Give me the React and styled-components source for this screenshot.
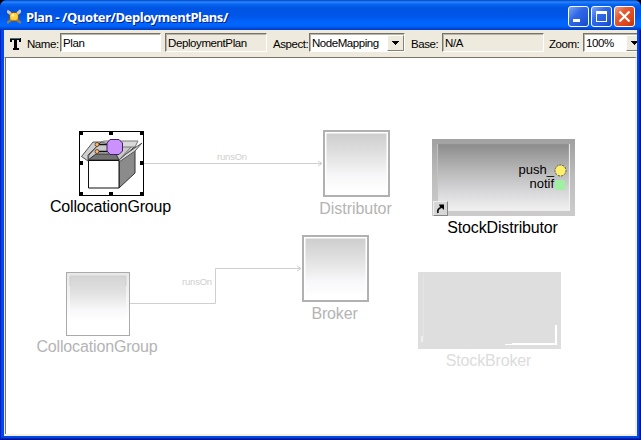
import React from "react";
import styled, { createGlobalStyle } from "styled-components";

const Global = createGlobalStyle`
  html, body { margin: 0; padding: 0; background: #000; overflow: hidden; }
  * { box-sizing: border-box; }
`;

const Window = styled.div`
  width: 641px;
  height: 440px;
  display: flex;
  flex-direction: column;
  overflow: hidden;
  border-radius: 7px 7px 0 0;
  background: #0048e8;
  box-shadow: inset 1px 0 #001dc0, inset -1px -1px #00128c, inset -2px -2px #0024b8;
  font-family: "Liberation Sans", Arial, sans-serif;
  color: #000;
`;

const TitleBar = styled.header`
  height: 30px;
  flex: none;
  display: flex;
  align-items: center;
  padding: 2px 6px 0 7px;
  background: linear-gradient(#0044c8 0, #2a86fa 2px, #0868f4 4px, #0054e2 8px, #0056e8 16px, #0064fc 22px, #0066ff 26px, #0050e0 28px, #0038bc 30px);
`;

const Title = styled.h1`
  flex: 1;
  margin: 1px 0 0 5px;
  font: bold 13px/20px "Noto Sans", sans-serif;
  letter-spacing: -0.43px;
  white-space: nowrap;
  color: #fff;
  text-shadow: 1px 1px #00228c;
`;

const WindowButton = styled.button`
  width: 21px;
  height: 21px;
  margin-left: 2px;
  padding: 0;
  border: 1px solid #fff;
  border-radius: 3px;
  background: ${(p) =>
    p.$close
      ? "linear-gradient(135deg, #f0a088 0, #e45a34 35%, #dc4418 75%, #b83410)"
      : "linear-gradient(135deg, #7ca4f8 0, #3068e8 40%, #2458dc 75%, #1848bc)"};
  svg { display: block; }
`;

const Toolbar = styled.div`
  height: 27px;
  flex: none;
  margin: 0 4px;
  padding: 3px 0 0 5px;
  display: flex;
  align-items: flex-start;
  overflow: hidden;
  background: #eeeadd;
  font-size: 11.5px;
  > svg { flex: none; }
`;

const FieldLabel = styled.label`
  flex: none;
  width: ${(p) => p.$width}px;
  padding-left: ${(p) => p.$indent}px;
  line-height: 22px;
  letter-spacing: -0.45px;
  white-space: nowrap;
`;

const Field = styled.div`
  flex: none;
  display: flex;
  width: ${(p) => p.$width}px;
  height: 19px;
  padding-left: 2px;
  border: 1px solid;
  border-color: #77736a #fff #fff #77736a;
  box-shadow: inset 1px 1px #b9b5a9;
  background: ${(p) => (p.$readOnly ? "#eeeadd" : "#fff")};
  line-height: 18px;
  letter-spacing: ${(p) => p.$spacing || -0.4}px;
  white-space: nowrap;
  span { flex: 1; }
`;

const DropButton = styled.i`
  flex: none;
  width: 17px;
  height: 16px;
  margin-top: 1px;
  display: flex;
  align-items: center;
  justify-content: center;
  background: #eeeadd;
  border: 1px solid;
  border-color: #fff #858174 #858174 #fff;
`;

const Canvas = styled.main`
  position: relative;
  flex: none;
  height: 379px;
  margin: 0 4px;
  border: 1px solid;
  border-color: #787368 #f2efe6 #f2efe6 #eeeadd;
  border-bottom-width: 2px;
  border-right-width: 2px;
  box-shadow: inset 1px 0 #787368;
  background: #fff;
  overflow: hidden;
`;

/* Canvas coordinates are shifted by the window frame. */
const Item = styled.div`
  position: absolute;
  left: ${(p) => p.$x - 5}px;
  top: ${(p) => p.$y - 58}px;
  display: flex;
  flex-direction: column;
  align-items: center;
  width: ${(p) => p.$w}px;
`;

const Drawing = styled.svg`
  display: block;
  flex: none;
`;

const Links = styled.svg`
  position: absolute;
  left: -5px;
  top: -58px;
`;

const Caption = styled.span`
  margin-top: ${(p) => p.$gap || 1}px;
  margin-left: -2px;
  font-size: 16px;
  line-height: 20px;
  letter-spacing: ${(p) => p.$spacing || -0.15}px;
  white-space: nowrap;
  color: ${(p) => p.$color || "#b4b4b4"};
`;

const LinkCaption = styled.span`
  position: absolute;
  left: ${(p) => p.$x - 5}px;
  top: ${(p) => p.$y - 58}px;
  font-size: 9.5px;
  line-height: 12px;
  letter-spacing: -0.2px;
  color: #cfcfcf;
`;

const Component = styled.div`
  width: 143px;
  height: 77px;
  position: relative;
  border: 5px solid;
  border-image: linear-gradient(#a2a2a2, #bdbdbd 50%, #cbcbcb) 1;
  background: linear-gradient(#8b8b8b, #b3b3b3 35%, #d6d6d9 70%, #f2f2f2);
  box-shadow: inset 1px 0 1px #c4c4c4, inset -1px -1px 1px #f3f3f3;
`;

const Ports = styled.div`
  display: flex;
  flex-direction: column;
  align-items: flex-end;
  padding: 19px 3px 0 0;
`;

const Port = styled.div`
  display: flex;
  align-items: center;
  height: 14px;
  font-size: 13px;
  line-height: 14px;
  letter-spacing: 0;
`;

const Shortcut = styled.div`
  position: absolute;
  left: -4px;
  bottom: -5px;
  width: 15px;
  height: 15px;
  background: #d6d6d6;
  border: 1px solid #858585;
  border-top-color: #eee;
  border-left-color: #eee;
  svg { display: block; }
`;

function Arrow() {
  return (
    <svg width="7" height="4" viewBox="0 0 7 4" shapeRendering="crispEdges">
      <path d="M0 0H7L3.5 4Z" />
    </svg>
  );
}

function AppIcon() {
  return (
    <svg width="14" height="15" viewBox="0 0 14 15">
      <path d="M2.5 3.5H11.5V12H2.5Z" fill="#f5a51c" stroke="#7a5420" />
      <path d="M0 2L3.5 4.5M14 1.5L10.5 4.5" stroke="#c8c8bc" strokeWidth="3" />
      <path d="M0 14L4 11M10 11L14 14" stroke="#8d7c54" strokeWidth="2.5" />
      <circle cx="7" cy="7.5" r="3.6" fill="#ffd23f" />
      <path d="M4.5 6L7 4.5V7.5H4.5Z" fill="#fff6b8" />
    </svg>
  );
}

function NodeBox({ id, thin }) {
  const size = thin ? 64 : 67;
  return (
    <Drawing width={size} height={size} viewBox={`0 0 ${size} ${size}`}>
      <defs>
        <linearGradient id={id} x1="0" y1="0" x2="0" y2="1">
          <stop offset="0" stopColor={thin ? "#d4d4d4" : "#cdcdcd"} />
          <stop offset=".35" stopColor="#e0e0e0" />
          <stop offset=".75" stopColor="#f8f7f9" />
          <stop offset="1" stopColor="#fff" />
        </linearGradient>
        <linearGradient id={`${id}-rim`} x1="0" y1="0" x2="0" y2="1">
          <stop stopColor="#e8e8e8" />
          <stop offset=".75" stopColor="#fff" />
        </linearGradient>
      </defs>
      {thin ? (
        <>
          <rect x=".5" y=".5" width="63" height="63" fill={`url(#${id}-rim)`} stroke="#aaa" />
          <rect x="4" y="4" width="56" height="45" fill={`url(#${id})`} />
          <path d="M4 14V4H60V14" fill="none" stroke="#cfcfcf" />
        </>
      ) : (
        <>
          <rect x="1" y="1" width="65" height="65" fill="#fff" stroke="#b1b1b1" strokeWidth="2" />
          <rect x="3" y="3" width="61" height="58" fill={`url(#${id})`} />
          <path d="M3 62V3H64V62" fill="none" stroke="#fff" />
        </>
      )}
    </Drawing>
  );
}

function OpenBox() {
  const handles = [0, 30, 61];
  return (
    <Drawing width="65" height="65" viewBox="0 0 65 65">
      <rect x=".5" y=".5" width="64" height="64" fill="#fff" stroke="#000" shapeRendering="crispEdges" />
      <path d="M40 30L56 15V42L40 57Z" fill="#8b8b8b" stroke="#333" />
      <path d="M10 24L22 11H57L40 29H9Z" fill="#c9c9c9" stroke="#555" />
      <path d="M22 11L25 10H59L56 16H44Z" fill="#d9d9d9" stroke="#777" />
      <path d="M9 29L17 23H37L40 29Z" fill="#747474" stroke="#333" />
      <path d="M2.5 25.5L14 11H22L9 24V30Z" fill="#d0d0d0" stroke="#555" />
      <path d="M40 29L47 23L63 12L56 20L40 31Z" fill="#ddd" stroke="#555" />
      <path d="M9.5 29.5H40V57H9.5Z" fill="#fff" stroke="#111" />
      <path d="M18 13.5H31M18 20.5H31" stroke="#111" strokeWidth="1.4" />
      <circle cx="18" cy="13.5" r="2" fill="#ffb96e" stroke="#4b3520" strokeWidth=".8" />
      <circle cx="18" cy="20.5" r="2" fill="#ffb96e" stroke="#4b3520" strokeWidth=".8" />
      <path d="M31 8.5H40L43.5 12V20L40 23.5H31L28 20V12Z" fill="#ca91ff" stroke="#402060" />
      {handles.map((x) =>
        handles.map((y) => (x === 30 && y === 30 ? null : <rect key={`${x}-${y}`} x={x} y={y} width="4" height="4" />))
      )}
    </Drawing>
  );
}

export default function App() {
  return (
    <>
      <Global />
      <Window>
        <TitleBar>
          <AppIcon />
          <Title>Plan - /Quoter/DeploymentPlans/</Title>
          <WindowButton aria-label="Minimize">
            <svg width="19" height="19"><path d="M4 12H11V15H4Z" fill="#fff" /></svg>
          </WindowButton>
          <WindowButton aria-label="Maximize">
            <svg width="19" height="19"><path d="M4 4H15V15H4ZM5 7V14H14V7Z" fill="#fff" fillRule="evenodd" /></svg>
          </WindowButton>
          <WindowButton $close aria-label="Close">
            <svg width="19" height="19"><path d="M4.5 4.5L14.5 14.5M14.5 4.5L4.5 14.5" stroke="#fff" strokeWidth="2.2" /></svg>
          </WindowButton>
        </TitleBar>

        <Toolbar>
          <svg width="13" height="21" viewBox="0 0 13 21" shapeRendering="crispEdges">
            <path d="M1 5H12V9H10V7H8V15H10V17H4V15H5V7H3V9H1Z" />
            <path d="M1 5.5H11" stroke="#35717f" />
          </svg>
          <FieldLabel $width={38} $indent={5}>Name:</FieldLabel>
          <Field $width={101}>Plan</Field>
          <FieldLabel $width={4} $indent={0} />
          <Field $width={102} $readOnly>DeploymentPlan</Field>
          <FieldLabel $width={42} $indent={6}>Aspect:</FieldLabel>
          <Field $width={96} $spacing={-0.45}><span>NodeMapping</span><DropButton><Arrow /></DropButton></Field>
          <FieldLabel $width={37} $indent={6}>Base:</FieldLabel>
          <Field $width={102} $readOnly>N/A</Field>
          <FieldLabel $width={39} $indent={5}>Zoom:</FieldLabel>
          <Field $width={61}><span>100%</span><DropButton><Arrow /></DropButton></Field>
        </Toolbar>

        <Canvas>
          <Links width="641" height="440" fill="none" stroke="#cfcfcf">
            <path d="M144 163.5H322M318 161L322 163.5L318 166M130 303.5H215.5V268.5H301M297 266L301 268.5L297 271" />
          </Links>
          <LinkCaption $x={217} $y={151}>runsOn</LinkCaption>
          <LinkCaption $x={182} $y={276}>runsOn</LinkCaption>

          <Item $x={79} $y={131} $w={65}>
            <OpenBox />
            <Caption $color="#000">CollocationGroup</Caption>
          </Item>
          <Item $x={323} $y={130} $w={67}>
            <NodeBox id="distributor" />
            <Caption $gap={2} $spacing={-0.05}>Distributor</Caption>
          </Item>
          <Item $x={66} $y={272} $w={64}>
            <NodeBox id="group" thin />
            <Caption>CollocationGroup</Caption>
          </Item>
          <Item $x={302} $y={235} $w={67}>
            <NodeBox id="broker" />
            <Caption $gap={2}>Broker</Caption>
          </Item>

          <Item $x={432} $y={139} $w={143}>
            <Component>
              <Ports>
                <Port>
                  push_
                  <svg width="13" height="13"><circle cx="6.5" cy="6.5" r="5.5" fill="#fff06a" stroke="#555" strokeDasharray="2 1" /></svg>
                </Port>
                <Port>
                  notif
                  <svg width="13" height="13"><rect x="1" y="2" width="10" height="10" rx="1" fill="#9ff0a0" /></svg>
                </Port>
              </Ports>
              <Shortcut>
                <svg width="13" height="13" viewBox="0 0 13 13">
                  <path d="M4 11C3 8 5 6 8 5" fill="none" stroke="#111" strokeWidth="1.7" />
                  <path d="M5 2.5H10V8L8 6L6 5Z" />
                </svg>
              </Shortcut>
            </Component>
            <Caption $gap={2} $color="#000">StockDistributor</Caption>
          </Item>
          <Item $x={418} $y={272} $w={143}>
            <Drawing width="143" height="77">
              <rect width="143" height="77" fill="#dedede" />
              <path d="M5.5 2V65" stroke="#e4e4e4" />
              <path d="M4 64V70M87 72.5H95" stroke="#fff" />
              <path d="M94 72H138V53" fill="none" stroke="#fff" strokeWidth="2" />
            </Drawing>
            <Caption $gap={2} $color="#dcdcdc">StockBroker</Caption>
          </Item>
        </Canvas>
      </Window>
    </>
  );
}
